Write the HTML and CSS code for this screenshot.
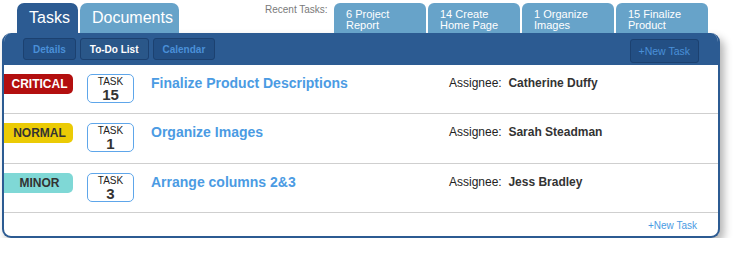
FILE: index.html
```html
<!DOCTYPE html>
<html>
<head>
<meta charset="utf-8">
<link rel="stylesheet" href="styles.css">
</head>
<body>
<div class="top">
  <div class="tabs">
    <div class="tab active">Tasks</div>
    <div class="tab">Documents</div>
  </div>
  <div class="recent">
    <div class="recent-label">Recent Tasks:</div>
    <div class="rtab">6 Project<br>Report</div>
    <div class="rtab">14 Create<br>Home Page</div>
    <div class="rtab">1 Organize<br>Images</div>
    <div class="rtab">15 Finalize<br>Product</div>
  </div>
</div>
<div class="panel">
  <div class="bar">
    <div class="subnav">
      <div class="btn">Details</div>
      <div class="btn on">To-Do List</div>
      <div class="btn">Calendar</div>
    </div>
    <div class="btn new">+New Task</div>
  </div>
  <div class="row">
    <div class="badge critical">CRITICAL</div>
    <div class="num"><span class="lbl">TASK</span><span class="n">15</span></div>
    <div class="title">Finalize Product Descriptions</div>
    <div class="assignee">Assignee:&nbsp; <b>Catherine Duffy</b></div>
  </div>
  <div class="row">
    <div class="badge normal">NORMAL</div>
    <div class="num"><span class="lbl">TASK</span><span class="n">1</span></div>
    <div class="title">Organize Images</div>
    <div class="assignee">Assignee:&nbsp; <b>Sarah Steadman</b></div>
  </div>
  <div class="row">
    <div class="badge minor">MINOR</div>
    <div class="num"><span class="lbl">TASK</span><span class="n">3</span></div>
    <div class="title">Arrange columns 2&amp;3</div>
    <div class="assignee">Assignee:&nbsp; <b>Jess Bradley</b></div>
  </div>
  <div class="foot"><span class="link">+New Task</span></div>
</div>
</body>
</html>
```
FILE: styles.css
```css
* { box-sizing: border-box; }
body {
  margin: 0;
  background: #fff;
  font-family: "Liberation Sans", Arial, sans-serif;
}
.top {
  display: flex;
  height: 33px;
  padding-top: 3px;
}
.tabs {
  display: flex;
  gap: 2px;
  margin-left: 17px;
}
.tab {
  height: 30px;
  padding: 6px 12px 0;
  font-size: 16px;
  color: #fff;
  background: #67a3c9;
  border-radius: 7px 7px 0 0;
}
.tab.active {
  background: #2c5b92;
  width: 61px;
}
.tab:not(.active) { width: 99px; }
.recent {
  display: flex;
  margin-left: 86px;
}
.recent-label {
  font-size: 10px;
  color: #7a7a7a;
  margin-right: 5px;
  padding-top: 1px;
  width: 64px;
  white-space: nowrap;
}
.rtab {
  width: 92px;
  height: 30px;
  margin-right: 2px;
  padding: 6px 0 0 12px;
  font-size: 11px;
  line-height: 11px;
  color: #fff;
  background: #67a3c9;
  border-radius: 6px 6px 0 0;
  overflow: hidden;
}
.panel {
  margin-left: 2px;
  width: 718px;
  height: 205px;
  border: 2px solid #2c5b92;
  border-top: 0;
  border-radius: 9px;
  box-shadow: 4px 5px 8px rgba(0,0,0,0.3);
  overflow: hidden;
  background: #fff;
}
.bar {
  height: 32px;
  background: #2c5b92;
  display: flex;
  align-items: center;
  justify-content: space-between;
  padding: 0 19px 0 19px;
}
.subnav { display: flex; gap: 4px; }
.btn {
  height: 22px;
  padding: 0 9px;
  display: flex;
  align-items: center;
  font-size: 10px;
  font-weight: bold;
  color: #4a8fd8;
  background: #234f84;
  border: 1px solid #1c4170;
  border-radius: 3px;
}
.btn.on { color: #fff; background: #2a5789; }
.btn.new { font-weight: normal; font-size: 10.5px; padding: 0 8px; height: 24px; margin-top: 3px; }
.row {
  height: 49px;
  border-bottom: 1px solid #cfcfcf;
  display: flex;
  align-items: flex-start;
  padding-top: 9px;
}
.row:nth-child(3) { height: 50px; }
.badge {
  width: 69px;
  height: 20px;
  border-radius: 0 5px 5px 0;
  font-size: 12px;
  font-weight: bold;
  display: flex;
  align-items: center;
  justify-content: center;
  padding-left: 2px;
}
.critical { background: #b30f0f; color: #fff; }
.normal { background: #ebcb05; color: #333; }
.minor { background: #7fd8d6; color: #333; }
.num {
  margin-left: 14px;
  width: 47px;
  height: 29px;
  border: 1px solid #5ea6ea;
  border-radius: 5px;
  display: flex;
  flex-direction: column;
  align-items: center;
  color: #222;
}
.lbl { font-size: 10px; line-height: 10px; margin-top: 2px; }
.n { font-size: 15px; font-weight: bold; line-height: 15px; color: #333; }
.title {
  margin-left: 17px;
  width: 298px;
  font-size: 14px;
  font-weight: bold;
  color: #4b9be3;
  margin-top: 1px;
}
.assignee {
  font-size: 12px;
  color: #222;
  margin-top: 2px;
}
.assignee b { color: #333; }
.foot {
  height: 24px;
  display: flex;
  align-items: center;
  justify-content: flex-end;
  padding-right: 21px;
}
.link { font-size: 10px; color: #4b9be3; }
```
